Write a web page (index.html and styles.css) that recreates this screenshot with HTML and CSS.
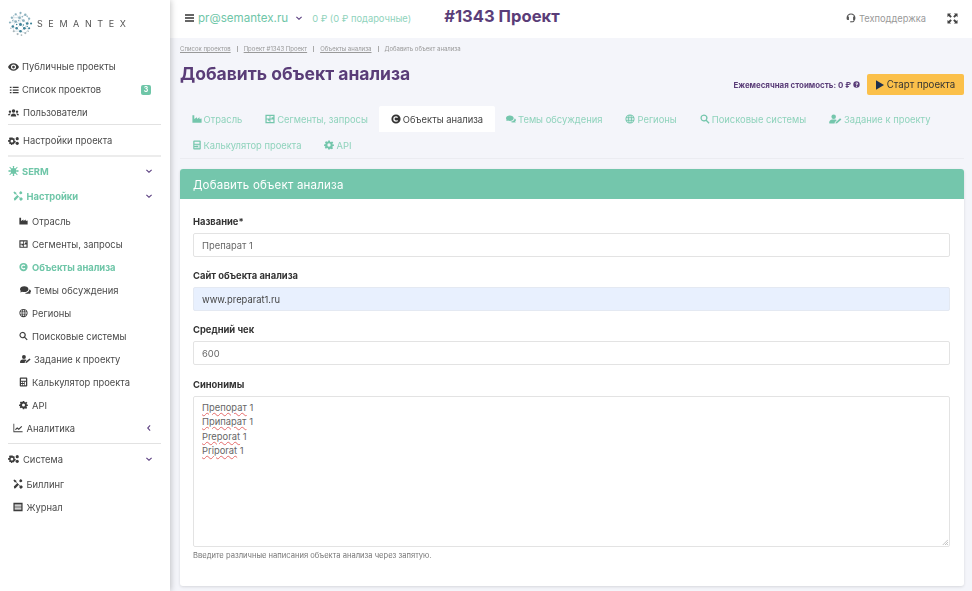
FILE: index.html
```html
<!DOCTYPE html>
<html lang="ru">
<head>
<meta charset="utf-8">
<title>Добавить объект анализа</title>
<link rel="stylesheet" href="styles.css">
</head>
<body>
<svg class="defs" width="0" height="0" aria-hidden="true">
  <symbol id="i-eye" viewBox="0 0 24 18"><path fill-rule="evenodd" d="M12 1C6.500 1 2.300 4.600 0 9c2.300 4.400 6.500 8 12 8s9.700-3.600 12-8c-2.300-4.400-6.500-8-12-8zm0 13.500A5.500 5.500 0 1 1 12 3.500a5.500 5.500 0 0 1 0 11zM12 6a3 3 0 1 0 3 3 3 3 0 0 0-3-3z"/></symbol>
  <symbol id="i-list" viewBox="0 0 24 24"><path d="M2 4h4v3H2zM9 4h14v3H9zM2 10.500h4v3H2zM9 10.500h14v3H9zM2 17h4v3H2zM9 17h14v3H9z"/></symbol>
  <symbol id="i-users" viewBox="0 0 28 22"><circle cx="14" cy="6" r="4.500"/><circle cx="5" cy="7.500" r="3"/><circle cx="23" cy="7.500" r="3"/><path d="M7 20c0-5 3-8 7-8s7 3 7 8zM0 17c0-3 2-5 4.500-5 1 0 1.800.3 2.500.8C5.500 14 5 15.500 5 17zM28 17c0-3-2-5-4.500-5-1 0-1.800.3-2.500.8 1.500 1.200 2 2.700 2 4.200z"/></symbol>
  <symbol id="i-cogs" viewBox="0 0 28 22"><path fill-rule="evenodd" d="M8 2h4l.6 2.600 2.300-1 2.600 2.600-1.300 2.200.9 2.100 2.400.6v3.800l-2.400.6-.9 2.100-2.600 2.300-2.300-1-.6 2.100H8l-.6-2.600-2.300 1-2.600-2.600 1.300-2.100-.9-2.100L0 13V9.200l2.900-.6.9-2.100-1.300-2.200 2.600-2.600 2.300 1zM10 8a3.500 3.500 0 1 0 0 7 3.500 3.500 0 0 0 0-7z"/><circle cx="23.500" cy="5" r="4"/><circle cx="23.500" cy="17" r="4"/></symbol>
  <symbol id="i-virus" viewBox="0 0 24 24"><circle cx="12" cy="12" r="7"/><path d="M10.800 0h2.400v24h-2.400zM0 10.800h24v2.400H0zM3.500 2l18.500 18.500-1.500 1.500L2 3.500zM20.500 2l1.500 1.500L3.500 22 2 20.500z"/><circle cx="12" cy="2" r="2"/><circle cx="12" cy="22" r="2"/><circle cx="2" cy="12" r="2"/><circle cx="22" cy="12" r="2"/></symbol>
  <symbol id="i-tools" viewBox="0 0 24 24"><path d="M3 1l5 3v3l9 9 3-1 4 4-5 5-4-4 1-3-9-9H4L1 3zM17 1c3-1 6 2 5 5l-3 2-3-1-1-3zM2 18L10 10l4 4-8 8-3 1z"/></symbol>
  <symbol id="i-industry" viewBox="0 0 24 20"><path d="M1 1h4.500v9L12 6v4l6-4v4l5-1.500V19H1z"/></symbol>
  <symbol id="i-group" viewBox="0 0 24 22"><path fill-rule="evenodd" d="M1 1h22v20H1zM4 4v6h7V4zM13 12v6h7v-6zM4 12v6h7v-3H7v-3zM13 4v6h3V7h4V4z"/></symbol>
  <symbol id="i-copy" viewBox="0 0 24 24"><path fill-rule="evenodd" d="M12 1a11 11 0 1 0 0 22 11 11 0 0 0 0-22zm0 4.500c2 0 3.700.8 4.800 2l-2 2.300C14 9 13.100 8.600 12 8.600a3.400 3.400 0 1 0 0 6.800c1.200 0 2.100-.4 2.900-1.200l2 2.300c-1.100 1.200-2.900 2-4.900 2a6.500 6.500 0 1 1 0-13z"/></symbol>
  <symbol id="i-comments" viewBox="0 0 26 20"><path d="M10 1C4.500 1 0 4 0 8c0 1.700.8 3.200 2 4.400-.5 1.200-1.200 2.200-2 3 2 0 3.500-.6 4.700-1.500 1.600.7 3.400 1.100 5.300 1.100 5.500 0 10-3 10-7s-4.500-7-10-7z"/><path d="M22 9.500c0 4.500-5 7.700-10.500 7.500 1.500 1.300 3.800 2 6.300 2 1 0 2.300-.2 3.300-.6 1 .7 2.400 1.300 4 1.100-.6-.7-1.200-1.600-1.500-2.600 1.500-1 2.400-2.400 2.400-4 0-1.800-1.400-3.400-3.500-4.300z"/></symbol>
  <symbol id="i-globe" viewBox="0 0 24 24"><path fill-rule="evenodd" d="M12 1a11 11 0 1 0 0 22 11 11 0 0 0 0-22zM9.200 3.700C8.400 5 7.900 6.500 7.600 8H4.200a9 9 0 0 1 5-4.300zM12 3.200c1 1.200 1.900 3 2.300 4.800H9.700C10.100 6.200 11 4.400 12 3.200zM14.800 3.700a9 9 0 0 1 5 4.300h-3.400c-.3-1.500-.8-3-1.600-4.300zM3.400 10h3.900v4H3.400a9 9 0 0 1 0-4zM9.300 10h5.400v4H9.300zM16.700 10h3.900a9 9 0 0 1 0 4h-3.900zM4.200 16h3.400c.3 1.500.8 3 1.600 4.300a9 9 0 0 1-5-4.300zM9.700 16h4.600c-.4 1.800-1.300 3.600-2.300 4.800-1-1.200-1.900-3-2.300-4.800zM16.400 16h3.400a9 9 0 0 1-5 4.300c.8-1.300 1.300-2.800 1.600-4.300z"/></symbol>
  <symbol id="i-search" viewBox="0 0 24 24"><path fill-rule="evenodd" d="M9.500 1a8.500 8.500 0 0 1 6.900 13.500l6.600 6.500-2.300 2.300-6.500-6.600A8.500 8.500 0 1 1 9.500 1zm0 3a5.500 5.500 0 1 0 0 11 5.500 5.500 0 0 0 0-11z"/></symbol>
  <symbol id="i-useredit" viewBox="0 0 28 22"><circle cx="10" cy="6" r="5"/><path d="M0 20c0-5 3-8 7-8h6c1.500 0 3 .5 4 1.400L12.500 18l-.5 3H1c-.6 0-1-.4-1-1zM14 21l.6-2.800L24 9.500l3 2.500-9.500 8.500z"/></symbol>
  <symbol id="i-calc" viewBox="0 0 20 24"><path fill-rule="evenodd" d="M3 1h14c1.200 0 2 .8 2 2v18c0 1.200-.8 2-2 2H3c-1.200 0-2-.8-2-2V3c0-1.200.8-2 2-2zM4 4v5h12V4zM4 11.500v3h3v-3zM8.500 11.500v3h3v-3zM13 11.500v8h3v-8zM4 16.500v3h3v-3zM8.500 16.500v3h3v-3z"/></symbol>
  <symbol id="i-cog" viewBox="0 0 24 24"><path fill-rule="evenodd" d="M10 1h4l.7 3.200 2 .8 2.800-1.700 2.800 2.800L20 8.900l.8 2L24 11v3l-3.200.8-.8 2 1.700 2.800-2.800 2.800-2.800-1.700-2 .8L14 23h-4l-.7-3.200-2-.8-2.800 1.700-2.800-2.800L3.400 17l-.8-2L0 14v-3l3.200-.7.8-2-1.700-2.800 2.800-2.800L7.900 4.300l2-.8zM12 8a4 4 0 1 0 0 8 4 4 0 0 0 0-8z"/></symbol>
  <symbol id="i-chart" viewBox="0 0 24 22"><path d="M1 1h2v18h20v2H1z"/><path d="M5 14l5-5 4 3 6-6 2 2-8 8-4-3-3.500 3.500z"/></symbol>
  <symbol id="i-news" viewBox="0 0 24 22"><path fill-rule="evenodd" d="M1 1h22v20H1zM4 5v3h16V5zM4 10v2h16v-2zM4 14v3h16v-3z"/></symbol>
  <symbol id="i-help" viewBox="0 0 24 24"><path fill-rule="evenodd" d="M12 1a11 11 0 1 0 0 22 11 11 0 0 0 0-22zm.3 4.500c2.600 0 4.700 1.500 4.700 3.900 0 3-3.400 3-3.400 4.900v.4h-3.200v-.7c0-3 3.100-3.100 3.100-4.400 0-.7-.7-1.200-1.500-1.200-1 0-1.600.5-2.300 1.400L8.700 8c1-1.600 2-2.500 3.600-2.500zM12 16a2 2 0 1 1 0 4 2 2 0 0 1 0-4z"/></symbol>
  <symbol id="i-headset" viewBox="0 0 24 24"><path fill-rule="evenodd" d="M12 1C6 1 1.500 5.500 1.500 11v3c0 1.500 1 2.500 2.500 2.500h3v-8H4.500C5 6 8 3.500 12 3.500S19 6 19.500 8.500H17v8h1.500c-.5 2-2 3-4 3h-1.500a1.700 1.700 0 1 0 0 2.500H15c3 0 5.500-2 6-5.500 1-.4 1.500-1.300 1.500-2.500v-3C22.500 5.500 18 1 12 1z"/></symbol>
  <symbol id="i-expand" viewBox="0 0 24 24"><path d="M1 1h8L6.500 3.500l4 4-3 3-4-4L1 9zM23 1v8l-2.500-2.500-4 4-3-3 4-4L15 1zM1 23v-8l2.500 2.500 4-4 3 3-4 4L9 23zM23 23h-8l2.500-2.500-4-4 3-3 4 4L23 15z"/></symbol>
  <symbol id="i-down" viewBox="0 0 12 8"><path d="M1.500 1L6 5l4.500-4L12 2.500 6 8 0 2.500z"/></symbol>
  <symbol id="i-left" viewBox="0 0 8 12"><path d="M7 1.500L3 6l4 4.500L5.500 12 0 6l5.500-6z"/></symbol>
</svg>

<div class="app">
  <aside class="sidebar">
    <div class="brand">
      <svg class="brand-mark" viewBox="0 0 26 26" aria-hidden="true">
        <path d="M4 7l8 0 4 3 4 3-3 5-4-4-5-3zM8 11l-3 5 4 2 4-4M13 14l4 4-4 3-4-3M12 7l1 7M8 3.500l4 3.500 6-3 4 4-2 5M2 12l6-1M5 16l1 5 7 0 5 2 4-5-5 0M13 2l-1 5" fill="none" stroke="#bcd0d6" stroke-width=".6"/>
        <g fill="#8db2bf"><circle cx="13" cy="2" r="1.100"/><circle cx="8" cy="3.500" r="1.200"/><circle cx="18" cy="4" r="1.300"/><circle cx="4" cy="7" r="1.200"/><circle cx="12" cy="7" r="1.400"/><circle cx="22" cy="8" r="1.200"/><circle cx="2" cy="12" r="1.100"/><circle cx="8" cy="11" r="1.400"/><circle cx="16" cy="10" r="1.500"/><circle cx="6" cy="5" r=".7"/><circle cx="15" cy="6" r=".8"/><circle cx="20" cy="5.500" r=".7"/><circle cx="5" cy="10" r=".8"/><circle cx="11" cy="10" r=".8"/></g>
        <g fill="#3f8398"><circle cx="20" cy="13" r="1.400"/><circle cx="24" cy="13" r="1.100"/><circle cx="13" cy="14" r="1.500"/><circle cx="5" cy="16" r="1.300"/><circle cx="9" cy="18" r="1.300"/><circle cx="17" cy="18" r="1.400"/><circle cx="22" cy="18" r="1.100"/><circle cx="13" cy="21" r="1.300"/><circle cx="16" cy="14.500" r=".8"/><circle cx="9" cy="14" r=".8"/><circle cx="20" cy="16" r=".7"/></g>
        <g fill="#a9b6bb"><circle cx="6" cy="21" r="1.100"/><circle cx="18" cy="23" r="1.100"/><circle cx="10" cy="24" r="1.100"/><circle cx="14" cy="25" r=".9"/><circle cx="3" cy="18" r=".8"/><circle cx="21" cy="21" r=".8"/></g>
      </svg>
      <span class="brand-name">SEMANTEX</span>
    </div>

    <nav class="nav">
      <a class="nav-item"><svg class="ico"><use href="#i-eye"/></svg>Публичные проекты</a>
      <a class="nav-item"><svg class="ico ico-list"><use href="#i-list"/></svg>Список проектов<span class="badge">3</span></a>
      <a class="nav-item"><svg class="ico gap"><use href="#i-users"/></svg>Пользователи</a>
      <hr class="rule">
      <a class="nav-item after-rule"><svg class="ico gap"><use href="#i-cogs"/></svg>Настройки проекта</a>
      <hr class="rule rule-2">
      <a class="nav-item accent group"><svg class="ico"><use href="#i-virus"/></svg>SERM<svg class="caret"><use href="#i-down"/></svg></a>
      <a class="nav-item accent group sub1 group-last"><svg class="ico"><use href="#i-tools"/></svg>Настройки<svg class="caret"><use href="#i-down"/></svg></a>
      <a class="nav-item sub2"><svg class="ico"><use href="#i-industry"/></svg>Отрасль</a>
      <a class="nav-item sub2"><svg class="ico"><use href="#i-group"/></svg>Сегменты, запросы</a>
      <a class="nav-item sub2 accent"><svg class="ico"><use href="#i-copy"/></svg>Объекты анализа</a>
      <a class="nav-item sub2"><svg class="ico wide"><use href="#i-comments"/></svg>Темы обсуждения</a>
      <a class="nav-item sub2"><svg class="ico"><use href="#i-globe"/></svg>Регионы</a>
      <a class="nav-item sub2"><svg class="ico"><use href="#i-search"/></svg>Поисковые системы</a>
      <a class="nav-item sub2"><svg class="ico wide"><use href="#i-useredit"/></svg>Задание к проекту</a>
      <a class="nav-item sub2"><svg class="ico"><use href="#i-calc"/></svg>Калькулятор проекта</a>
      <a class="nav-item sub2"><svg class="ico"><use href="#i-cog"/></svg>API</a>
      <a class="nav-item sub1"><svg class="ico"><use href="#i-chart"/></svg>Аналитика<svg class="caret caret-left"><use href="#i-left"/></svg></a>
      <hr class="rule rule-3">
      <a class="nav-item"><svg class="ico gap"><use href="#i-cogs"/></svg>Система<svg class="caret"><use href="#i-down"/></svg></a>
      <a class="nav-item sub1 spaced"><svg class="ico"><use href="#i-tools"/></svg>Биллинг</a>
      <a class="nav-item sub1"><svg class="ico"><use href="#i-news"/></svg>Журнал</a>
    </nav>
  </aside>

  <div class="main">
    <header class="topbar">
      <span class="burger"><i></i><i></i><i></i></span>
      <span class="account">pr@semantex.ru</span>
      <svg class="account-caret"><use href="#i-down"/></svg>
      <span class="balance">0 ₽ (0 ₽ подарочные)</span>
      <span class="project">#1343 Проект</span>
      <span class="support"><svg class="ico"><use href="#i-headset"/></svg>Техподдержка</span>
      <svg class="expand"><use href="#i-expand"/></svg>
    </header>

    <div class="content">
      <div class="crumbs">
        <a>Список проектов</a><i></i><a>Проект #1343 Проект</a><i></i><a>Объекты анализа</a><i></i><span>Добавить объект анализа</span>
      </div>

      <div class="heading">
        <h1>Добавить объект анализа</h1>
        <div class="cost">
          <span class="cost-text">Ежемесячная стоимость: 0 ₽</span>
          <svg class="cost-help"><use href="#i-help"/></svg>
          <button class="start" type="button"><svg class="play" viewBox="0 0 10 12"><path d="M0 0l10 6-10 6z"/></svg>Старт проекта</button>
        </div>
      </div>

      <div class="tabs">
        <a class="tab"><svg class="ico"><use href="#i-industry"/></svg>Отрасль</a>
        <a class="tab"><svg class="ico"><use href="#i-group"/></svg>Сегменты, запросы</a>
        <a class="tab active"><svg class="ico"><use href="#i-copy"/></svg>Объекты анализа</a>
        <a class="tab"><svg class="ico"><use href="#i-comments"/></svg>Темы обсуждения</a>
        <a class="tab"><svg class="ico"><use href="#i-globe"/></svg>Регионы</a>
        <a class="tab"><svg class="ico"><use href="#i-search"/></svg>Поисковые системы</a>
        <a class="tab"><svg class="ico ico-wide"><use href="#i-useredit"/></svg>Задание к проекту</a>
        <a class="tab"><svg class="ico"><use href="#i-calc"/></svg>Калькулятор проекта</a>
        <a class="tab"><svg class="ico"><use href="#i-cog"/></svg>API</a>
      </div>

      <section class="card">
        <h2 class="card-head">Добавить объект анализа</h2>
        <div class="card-body">
          <div class="field">
            <div class="label">Название*</div>
            <div class="input">Препарат 1</div>
          </div>
          <div class="field">
            <div class="label">Сайт объекта анализа</div>
            <div class="input autofill">www.preparat1.ru</div>
          </div>
          <div class="field">
            <div class="label">Средний чек</div>
            <div class="input">600</div>
          </div>
          <div class="field">
            <div class="label">Синонимы</div>
            <div class="input area">
              <div><span class="typo">Препорат</span> 1</div>
              <div><span class="typo">Припарат</span> 1</div>
              <div><span class="typo">Preporat</span> 1</div>
              <div><span class="typo">Priporat</span> 1</div>
              <svg class="grip" viewBox="0 0 8 8"><path d="M8 1L1 8M8 4L4 8M8 6.500L6.500 8" stroke="#9a9a9a" fill="none" stroke-width=".8"/></svg>
            </div>
            <div class="hint">Введите различные написания объекта анализа через запятую.</div>
          </div>
        </div>
      </section>
    </div>
  </div>
</div>
</body>
</html>
```

FILE: styles.css
```css
* { box-sizing: border-box; }
html, body { margin: 0; height: 100%; overflow: hidden; }
body { font-family: Inter, "Liberation Sans", sans-serif; color: #444; background: #f4f5fa; }
.defs { position: absolute; }
.app { display: flex; height: 591px; width: 972px; filter: blur(.35px); }

/* sidebar */
.sidebar { width: 170px; flex: none; background: #fff; box-shadow: 1px 0 6px rgba(0,0,0,.22); position: relative; z-index: 2; padding: 0 8px; }
.brand { display: flex; align-items: center; height: 47px; }
.brand-mark { width: 25px; height: 25px; margin-right: 4px; margin-left: 0; flex: none; }
.brand-name { font-size: 9px; letter-spacing: 5.600px; color: #555; }
.nav { display: flex; flex-direction: column; padding-top: 8px; }
.nav-item { display: flex; align-items: center; height: 23px; font-size: 9.400px; color: #4a4a4a; white-space: nowrap; }
.nav-item .ico { width: 11px; height: 10px; margin-right: 3px; fill: #3c3c3c; flex: none; }
.nav-item .ico.gap { margin-right: 4px; }
.nav-item .ico-list { width: 10px; margin-right: 3px; margin-left: 1px; }
.nav-item.accent { color: #6fc6a8; font-weight: 700; }
.nav-item.accent .ico { fill: #6fc6a8; }
.group { height: 25px; }
.group-last { margin-bottom: 1px; }
.after-rule { margin-top: 4px; }
.sub1 { padding-left: 5px; }
.sub1 .ico { width: 10px; margin-right: 3.500px; }
.sub2 { padding-left: 11px; }
.sub2 .ico { width: 9px; margin-right: 4px; }
.sub2 .ico.wide { width: 11px; margin-left: 1px; margin-right: 3px; }
.spaced { margin-top: 2px; }
.caret { width: 6px; height: 4px; margin-left: auto; margin-right: 10px; fill: #5b3f80; }
.caret-left { width: 4px; height: 6px; margin-right: 11px; }
.badge { margin-left: auto; margin-right: 11px; width: 10px; height: 10px; border-radius: 2px; background: #6fc6a8; color: #fff; font-size: 7px; font-weight: 700; text-align: center; line-height: 10px; }
.rule { width: 153px; margin: 0; border: 0; border-top: 1px solid #e2e2e2; flex: none; }
.rule-2 { margin-top: 3px; margin-bottom: 1.500px; border-top-width: 2px; border-color: #ececec; }
.rule-3 { margin-top: 3.500px; margin-bottom: 3.500px; }

/* top bar */
.main { flex: 1; min-width: 0; display: flex; flex-direction: column; }
.topbar { height: 38px; flex: none; background: #fff; display: flex; align-items: center; padding: 0 14px 2px 15px; position: relative; }
.burger { display: flex; flex-direction: column; gap: 1.500px; width: 9px; margin-right: 4px; }
.burger i { height: 1.500px; background: #666; display: block; }
.account { font-size: 11.600px; color: #6fc6a8; }
.account-caret { width: 6px; height: 4px; fill: #5b3f80; margin: 0 10px 0 8px; }
.balance { font-size: 9.350px; color: #8fd3bc; }
.project { font-size: 16.600px; font-weight: 700; color: #5a3d78; margin-left: 33px; margin-top: -5px; }
.support { margin-left: auto; display: flex; align-items: center; font-size: 9.300px; color: #999; }
.support .ico { width: 10px; height: 10px; margin-right: 3px; fill: #555; }
.expand { width: 11px; height: 11px; fill: #444; margin-left: 21px; }

/* content */
.content { flex: 1; padding: 0 8px 0 10px; min-height: 0; }
.crumbs { display: flex; align-items: center; height: 21px; font-size: 6px; color: #999; }
.crumbs a { text-decoration: underline; }
.crumbs i { width: 1px; height: 6px; background: #aaa; margin: 0 6px; }
.heading { display: flex; justify-content: space-between; height: 47px; }
h1 { margin: 4px 0 0; font-size: 17.500px; line-height: 22px; font-weight: 700; color: #5a3d78; white-space: nowrap; }
.cost { display: flex; align-items: center; align-self: flex-start; margin-top: 15px; }
.cost-text { font-size: 7.900px; font-weight: 700; color: #5a3d78; }
.cost-help { width: 7px; height: 7px; fill: #5a3d78; margin: 0 7px 0 2px; }
.start { display: flex; align-items: center; justify-content: center; width: 97px; height: 21px; border: 0; border-radius: 2px; background: #fbc04a; font: 9.700px Inter, "Liberation Sans", sans-serif; color: #333; padding: 0; }
.play { width: 8px; height: 10px; fill: #1f2f4d; margin-right: 3px; }

.tabs { display: flex; flex-wrap: wrap; border-bottom: 1px solid #ebecf1; }
.tab { display: flex; align-items: center; height: 26px; padding: 0 11.500px; font-size: 9.400px; color: #8fd3bc; white-space: nowrap; }
.tab .ico { width: 10px; height: 10px; margin-right: 2px; fill: #74c6ac; flex: none; }
.tab .ico-wide { width: 13px; height: 10px; }
.tab.active { background: #fff; color: #444; border-radius: 2px 2px 0 0; }
.tab.active .ico { fill: #333; }

.card { margin-top: 10px; height: 417px; background: #fff; border-radius: 3px; box-shadow: 0 1px 3px rgba(0,0,0,.12); overflow: hidden; }
.card-head { margin: 0; height: 30px; display: flex; align-items: center; padding: 1px 0 0 13px; background: #74c6ac; color: #fff; font-size: 11.500px; font-weight: 400; letter-spacing: .2px; }
.card-body { padding: 16px 14px 0 13px; }
.field { margin-bottom: 12.200px; }
.label { font-size: 9.400px; font-weight: 700; color: #333; height: 12px; line-height: 14px; margin-bottom: 6px; }
.input { height: 24px; display: flex; align-items: center; padding: 0 8px; border: 1px solid #e3e3e3; border-radius: 2px; font-size: 9.400px; color: #666; background: #fff; }
.autofill { background: #e8f0fe; color: #444; border-color: #e4e9f2; }
.area { display: block; position: relative; height: 151px; padding: 4.400px 8px; line-height: 14.300px; }
.typo { text-decoration: underline wavy #e56b6b .6px; text-underline-offset: 1px; }
.grip { position: absolute; right: 1px; bottom: 1px; width: 6px; height: 6px; }
.hint { font-size: 7.600px; color: #777; margin-top: 4px; height: 9px; line-height: 9px; }
```
